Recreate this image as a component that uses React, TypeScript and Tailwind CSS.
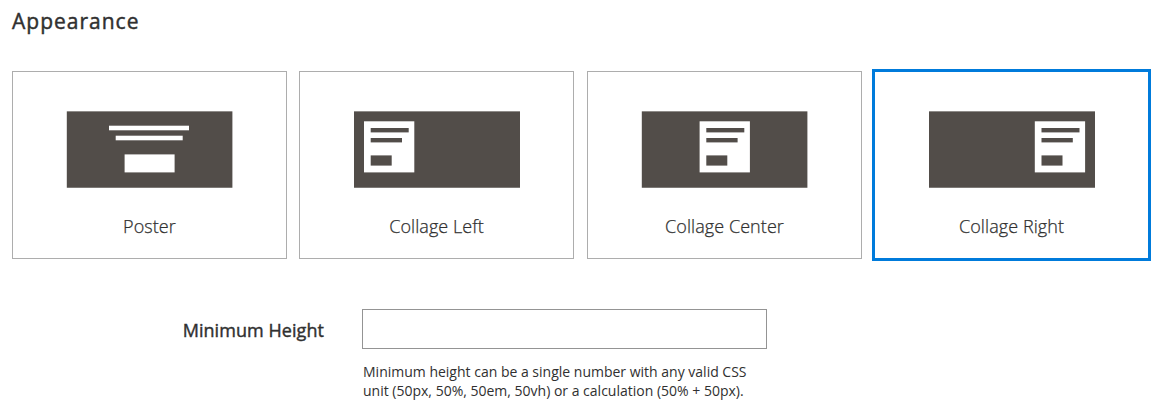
import React from "react";

type Kind = "poster" | "left" | "center" | "right";

function Thumb({ kind }: { kind: Kind }) {
  const start = kind === "poster" || kind === "center" ? -0.2 : 0;
  const width = kind === "poster" || kind === "center" ? 165.6 : 166;
  const x = kind === "left" ? 10 : kind === "center" ? 57.6 : 105.8;
  return (
    <svg width="166" height="77" viewBox="0 0 166 77" className="block shrink-0 overflow-visible">
      <rect x={start} y="0.35" width={width} height="76.400" fill="#524d49" />
      {kind === "poster" ? (
        <g fill="#fff">
          <rect x="42" y="14.700" width="80" height="4.600" />
          <rect x="48.700" y="24.700" width="67" height="4.600" />
          <rect x="57.600" y="43.400" width="50" height="18" />
        </g>
      ) : (
        <g>
          <rect x={x} y="10.300" width="50.300" height="51.100" fill="#fff" />
          <rect x={x + 6.7} y="17" width="38" height="4.400" fill="#524d49" />
          <rect x={x + 6.7} y="27" width="31.300" height="4.400" fill="#524d49" />
          <rect x={x + 6.7} y="44.400" width="21" height="10.200" fill="#524d49" />
        </g>
      )}
    </svg>
  );
}

function Card({ kind, label, selected }: { kind: Kind; label: string; selected?: boolean }) {
  return (
    <div
      className={
        selected
          ? "-mt-0.5 -ml-0.5 flex h-48 w-[279px] flex-col items-center border-3 border-[#007bdb] pt-[39px]"
          : "flex h-[188px] w-[275px] flex-col items-center border border-[#adadad] pt-[39px]"
      }
    >
      <Thumb kind={kind} />
      <span className="mt-[25px] text-[18px] leading-[26px] font-light tracking-[0.07px] text-[#303030] [-webkit-text-stroke:0.25px_#303030]">{label}</span>
    </div>
  );
}

export default function App() {
  return (
    <main className="h-[414px] w-[1173px] overflow-hidden bg-white pl-3 font-['Open_Sans',sans-serif] text-[#303030]">
      <h1 className="h-[71px] pt-[7px] text-[21px] leading-7 font-normal tracking-[1px] [-webkit-text-stroke:0.45px_#303030]">Appearance</h1>
      <div className="flex h-[238px] items-start">
        <div className="w-[287px]"><Card kind="poster" label="Poster" /></div>
        <div className="w-[288px]"><Card kind="left" label="Collage Left" /></div>
        <div className="w-[287px]"><Card kind="center" label="Collage Center" /></div>
        <Card kind="right" label="Collage Right" selected />
      </div>
      <div className="flex">
        <label htmlFor="height" className="w-[312px] pt-[9px] text-right text-[18px] leading-6 font-normal tracking-[0.06px] [-webkit-text-stroke:0.4px_#303030]">Minimum Height</label>
        <div className="ml-[38px]">
          <input id="height" className="block h-10 w-[405px] border border-[#949494] px-2 outline-none" />
          <p className="mt-[13px] ml-px text-[14px] leading-[19px]">
            Minimum height can be a single number with any valid CSS<br />
            unit (50px, 50%, 50em, 50vh) or a calculation (50% + 50px).
          </p>
        </div>
      </div>
    </main>
  );
}
